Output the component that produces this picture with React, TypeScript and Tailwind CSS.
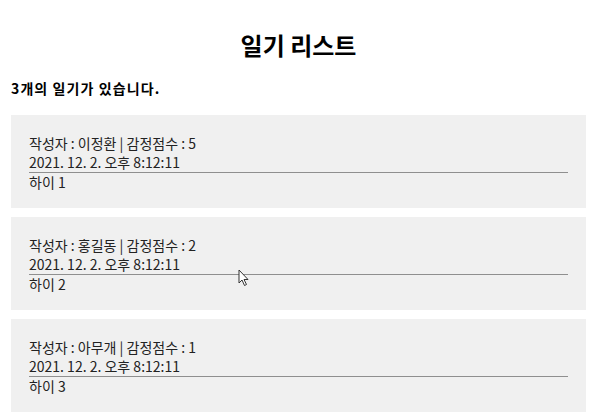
const diaries = [
  { id: 1, author: "이정환", emotion: 5, date: "2021. 12. 2. 오후 8:12:11", content: "하이 1" },
  { id: 2, author: "홍길동", emotion: 2, date: "2021. 12. 2. 오후 8:12:11", content: "하이 2" },
  { id: 3, author: "아무개", emotion: 1, date: "2021. 12. 2. 오후 8:12:11", content: "하이 3" },
];

function DiaryItem({ author, emotion, date, content }: (typeof diaries)[number]) {
  return (
    <div className="bg-[#f0f0f0] px-[18px] pt-[19px] pb-[16px] mb-[9px]">
      <div className="border-b border-[#8f8f8f] text-[14px] leading-[19px]">
        <div>
          작성자 : {author} | 감정점수 : {emotion}
        </div>
        <div>{date}</div>
      </div>
      <div className="text-[14px] leading-[19px]">{content}</div>
    </div>
  );
}

export default function App() {
  return (
    <div
      className="relative min-h-[420px] bg-white px-[11px] text-[#222]"
      style={{ fontFamily: '"Noto Sans CJK KR", "Noto Sans", sans-serif' }}
    >
      <h2 className="pt-[29px] text-center text-[24px] font-bold leading-[32px] text-black">일기 리스트</h2>
      <h4 className="mt-[17px] mb-[17px] text-[14px] font-bold leading-[20px] tracking-[1.1px] text-black">
        {diaries.length}개의 일기가 있습니다.
      </h4>
      <div>
        {diaries.map((d) => (
          <DiaryItem key={d.id} {...d} />
        ))}
      </div>
      <svg className="absolute left-[238px] top-[269px]" width="12" height="18" viewBox="0 0 12 18">
        <path d="M1 1 L1 14 L4 11 L6.5 16.5 L8.5 15.5 L6 10.5 L10 10.5 Z" fill="white" stroke="#333" strokeWidth="1" />
      </svg>
    </div>
  );
}
